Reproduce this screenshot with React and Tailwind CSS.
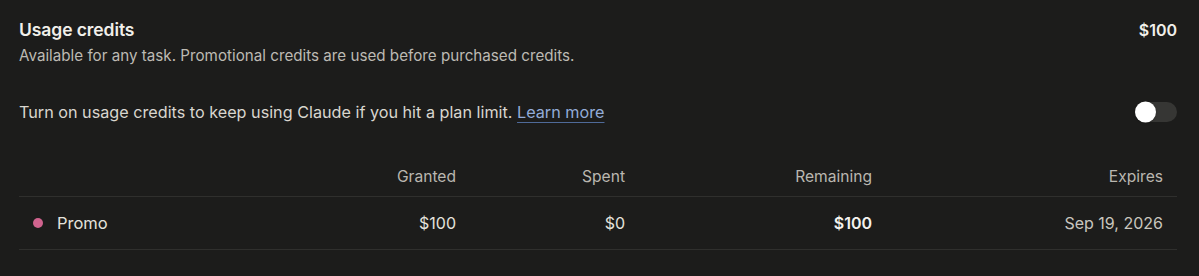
import React, { useState } from 'react';

const credits = [
  { id: 'promo', label: 'Promo', granted: '$100', spent: '$0', remaining: '$100', expires: 'Sep 19, 2026' }
];

const cols = 'grid grid-cols-[250px_201px_169px_247px_1fr]';

const App = () => {
  const [enabled, setEnabled] = useState(false);

  return (
    <div className="min-h-screen w-full bg-[#1c1c1b] pl-[19px] pr-[22px] pt-[19px] font-['Inter','Noto_Sans',sans-serif] text-[#e8e6e1]">
      {/* Header */}
      <div className="flex items-start justify-between">
        <div>
          <h2 className="text-[17.5px] font-semibold leading-[22px] tracking-[-0.005em] text-[#f1efea]">Usage credits</h2>
          <p className="mt-[4px] text-[15.2px] leading-[22px] text-[#bdbab3]">
            Available for any task. Promotional credits are used before purchased credits.
          </p>
        </div>
        <span className="text-[16px] font-semibold leading-[22px] text-[#f1efea]">$100</span>
      </div>

      {/* Toggle row */}
      <div className="mt-[33px] flex items-center justify-between">
        <p className="text-[16.2px] leading-[24px] text-[#d9d6cf]">
          Turn on usage credits to keep using Claude if you hit a plan limit.{' '}
          <a href="#" className="text-[#93acd8] underline decoration-[#4f6a99] decoration-1 underline-offset-[4px]">Learn more</a>
        </p>
        <button
          onClick={() => setEnabled(!enabled)}
          className={`relative flex h-[20px] w-[42px] items-center rounded-full ${enabled ? 'bg-[#2c84db]' : 'bg-[#363634]'}`}
        >
          <span
            className={`absolute top-1/2 h-[21px] w-[21px] -translate-y-1/2 rounded-full bg-white shadow ${enabled ? 'left-[21px]' : 'left-0'}`}
          />
        </button>
      </div>

      {/* Table */}
      <div className="mt-[42px]">
        <div className={`${cols} border-b border-[#2f2f2d] pb-[8px] text-[15.6px] leading-[22px] text-[#bab7b0]`}>
          <div />
          <div className="pr-[14px] text-right">Granted</div>
          <div className="pr-[14px] text-right">Spent</div>
          <div className="pr-[14px] text-right">Remaining</div>
          <div className="pr-[14px] text-right">Expires</div>
        </div>
        {credits.map((c) => (
          <div key={c.id} className={`${cols} h-[53px] items-center border-b border-[#2f2f2d] text-[16px] text-[#e4e2dc]`}>
            <div className="flex items-center gap-[14px] pl-[14px]">
              <span className="h-[10px] w-[10px] rounded-full bg-[#d0638e]" />
              <span className="text-[16.5px]">{c.label}</span>
            </div>
            <div className="pr-[14px] text-right">{c.granted}</div>
            <div className="pr-[14px] text-right">{c.spent}</div>
            <div className="pr-[14px] text-right font-semibold text-[#f4f2ee]">{c.remaining}</div>
            <div className="pr-[14px] text-right text-[#c9c6bf]">{c.expires}</div>
          </div>
        ))}
      </div>
    </div>
  );
};

export default App;
